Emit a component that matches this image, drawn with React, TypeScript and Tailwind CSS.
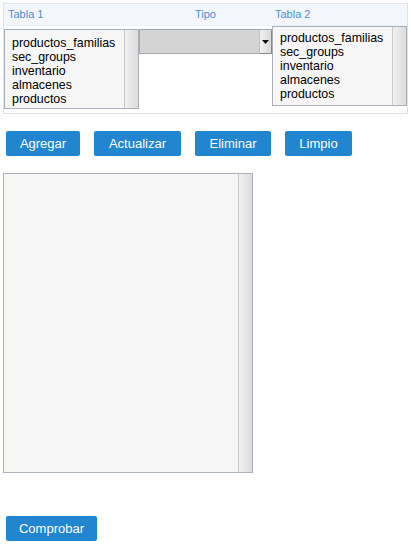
import React from "react";

const items = ["productos_familias", "sec_groups", "inventario", "almacenes", "productos"];

function ScrollTrack() {
  return (
    <div className="w-[14px] self-stretch border-l border-[#c9c9c9] bg-[linear-gradient(to_right,#f0f0f0,#dcdcdc)]" />
  );
}

function ListBox({ className, top }: { className?: string; top: string }) {
  return (
    <div className={"flex h-[80px] border border-[#a9b1bf] bg-[#f6f6f6] " + (className || "")}>
      <div className={"flex-1 pl-[7px] text-[12.4px] leading-[14px] text-black " + top}>
        {items.map((t) => (
          <div key={t}>{t}</div>
        ))}
      </div>
      <ScrollTrack />
    </div>
  );
}

function Btn({ children, className }: { children: React.ReactNode; className?: string }) {
  return (
    <button className={"h-[25px] rounded-[2px] bg-[#2185d0] text-center text-[13px] leading-[25px] text-white " + (className || "")}>
      {children}
    </button>
  );
}

export default function App() {
  return (
    <div className="min-h-[547px] w-[411px] bg-white font-['Liberation_Sans',Arial,sans-serif]">
      <div className="pl-[3px] pt-[3px]">
        <div className="h-[111px] w-[405px] border border-[#dde2ea]">
          <div className="grid h-[22px] grid-cols-[135px_133px_1fr] items-center border-b border-[#eef1f6] bg-[#f3f6fc] text-[11px] text-[#4a8fd4]">
            <div className="pl-[4px]">Tabla 1</div>
            <div className="text-center">Tipo</div>
            <div className="pl-[3px]">Tabla 2</div>
          </div>
          <div className="grid grid-cols-[135px_133px_1fr] items-start">
            <ListBox className="mt-[3px]" top="pt-[6px]" />
            <div className="mt-[3px] flex h-[25px] border border-[#a0a8b4] bg-[#d4d4d4]">
              <div className="flex-1" />
              <div className="flex w-[12px] items-center justify-center border-l border-[#c0c0c0] bg-[linear-gradient(to_right,#f2f2f2,#d8d8d8)] shadow-[1px_1px_0_#888]">
                <svg width="7" height="4" viewBox="0 0 7 4">
                  <path d="M0 0 L7 0 L3.5 4 Z" fill="#111" />
                </svg>
              </div>
            </div>
            <ListBox top="pt-[4px]" />
          </div>
        </div>
      </div>

      <div className="mt-[17px] flex gap-[14px] pl-[6px]">
        <Btn className="w-[74px]">Agregar</Btn>
        <Btn className="w-[87px]">Actualizar</Btn>
        <Btn className="w-[76px]">Eliminar</Btn>
        <Btn className="w-[67px]">Limpio</Btn>
      </div>

      <div className="ml-[3px] mt-[17px] flex h-[300px] w-[250px] border border-[#a9b1bf] bg-[#f6f6f6]">
        <div className="flex-1" />
        <ScrollTrack />
      </div>

      <div className="mt-[43px] pl-[6px]">
        <Btn className="w-[91px]">Comprobar</Btn>
      </div>
    </div>
  );
}
